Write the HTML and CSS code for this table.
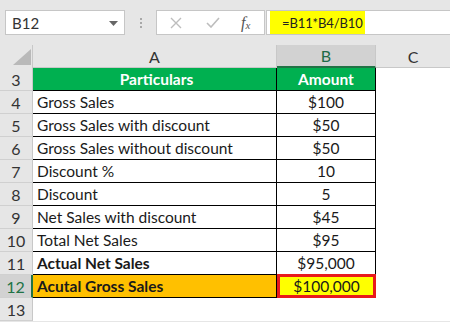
FILE: index.html
```html
<!DOCTYPE html>
<html>
<head>
<meta charset="utf-8">
<link rel="stylesheet" href="styles.css">
</head>
<body>
<div class="toolbar">
  <div class="namebox"><span>B12</span><svg class="caret" width="9" height="5" viewBox="0 0 9 5"><path d="M0 0h9L4.5 5z" fill="#666"/></svg></div>
  <div class="dots"><i></i><i></i><i></i></div>
  <div class="btns">
    <svg width="12" height="12" viewBox="0 0 12 12"><path d="M1 1l10 10M11 1L1 11" stroke="#bdbdbd" stroke-width="1.4" fill="none"/></svg>
    <svg width="14" height="11" viewBox="0 0 14 11"><path d="M1 6l4 4 8-9" stroke="#bdbdbd" stroke-width="1.6" fill="none"/></svg>
    <span class="fx">f<sub>x</sub></span>
  </div>
  <div class="formula"><span class="hl">=B11*B4/B10</span></div>
</div>
<div class="sheet">
  <div class="corner"><svg width="18" height="16" viewBox="0 0 18 16"><path d="M18 0V16H0z" fill="#b9b9b9"/></svg></div>
  <div class="colhead">A</div>
  <div class="colhead sel">B</div>
  <div class="colhead last">C</div>

  <div class="rowhead">3</div>
  <div class="cell th">Particulars</div>
  <div class="cell th num">Amount</div>
  <div class="blank"></div>

  <div class="rowhead">4</div>
  <div class="cell">Gross Sales</div>
  <div class="cell num">$100</div>
  <div class="blank"></div>

  <div class="rowhead">5</div>
  <div class="cell">Gross Sales with discount</div>
  <div class="cell num">$50</div>
  <div class="blank"></div>

  <div class="rowhead">6</div>
  <div class="cell">Gross Sales without discount</div>
  <div class="cell num">$50</div>
  <div class="blank"></div>

  <div class="rowhead">7</div>
  <div class="cell">Discount %</div>
  <div class="cell num">10</div>
  <div class="blank"></div>

  <div class="rowhead">8</div>
  <div class="cell">Discount</div>
  <div class="cell num">5</div>
  <div class="blank"></div>

  <div class="rowhead">9</div>
  <div class="cell">Net Sales with discount</div>
  <div class="cell num">$45</div>
  <div class="blank"></div>

  <div class="rowhead">10</div>
  <div class="cell">Total Net Sales</div>
  <div class="cell num">$95</div>
  <div class="blank"></div>

  <div class="rowhead">11</div>
  <div class="cell bold">Actual Net Sales</div>
  <div class="cell num">$95,000</div>
  <div class="blank"></div>

  <div class="rowhead selrow">12</div>
  <div class="cell bold orange">Acutal Gross Sales</div>
  <div class="cell num active">$100,000<span class="handle"></span></div>
  <div class="blank"></div>

  <div class="rowhead">13</div>
  <div class="blank"></div>
  <div class="blank"></div>
  <div class="blank"></div>
</div>
</body>
</html>
```

FILE: styles.css
```css
* { box-sizing: border-box; }
html, body { margin: 0; padding: 0; }
body {
  width: 450px;
  height: 322px;
  overflow: hidden;
  background: #e6e6e6;
  font-family: Lato, "Open Sans", sans-serif;
  color: #1a1a1a;
}
.toolbar {
  height: 45px;
  padding: 10px 0 0 5px;
  display: flex;
  align-items: flex-start;
}
.namebox {
  width: 120px;
  height: 25px;
  background: #fff;
  border: 1px solid #c6c6c6;
  display: flex;
  align-items: center;
  justify-content: space-between;
  padding: 0 6px 0 6px;
  font-size: 15px;
  color: #333;
}
.caret { margin-top: 1px; }
.dots {
  width: 31px;
  height: 25px;
  display: flex;
  flex-direction: column;
  align-items: center;
  justify-content: center;
  gap: 2px;
}
.dots i {
  display: block;
  width: 2px;
  height: 2px;
  background: #a8a8a8;
}
.btns {
  width: 109px;
  height: 25px;
  background: #fff;
  border: 1px solid #c6c6c6;
  display: flex;
  align-items: center;
  padding: 0 0 0 13px;
  gap: 0;
}
.btns svg:nth-child(1) { margin-right: 24px; }
.btns svg:nth-child(2) { margin-right: 21px; }
.fx {
  font-family: "Liberation Serif", serif;
  font-style: italic;
  font-size: 16px;
  color: #555;
  line-height: 1;
}
.fx sub { font-size: 11px; vertical-align: -1px; }
.formula {
  flex: 1;
  height: 25px;
  margin-left: 1px;
  background: #fff;
  border: 1px solid #c6c6c6;
  border-right: none;
  padding: 0 0 0 3px;
  display: flex;
  align-items: stretch;
}
.hl {
  background: #ffff00;
  width: 95px;
  padding-left: 12px;
  display: flex;
  align-items: center;
  font-size: 13px;
  letter-spacing: -0.1px;
  color: #222;
  white-space: nowrap;
}
.sheet {
  display: grid;
  grid-template-columns: 33px 244px 99px 1fr;
  grid-auto-rows: 23px;
  background: #fff;
}
.corner {
  background: #e6e6e6;
  border-right: 1px solid #c8c8c8;
  display: flex;
  align-items: flex-end;
  justify-content: flex-end;
  padding: 0 1px 3px 0;
}
.colhead {
  background: #e6e6e6;
  border-right: 1px solid #c8c8c8;
  display: flex;
  align-items: center;
  justify-content: center;
  font-size: 16px;
  color: #333;
  border-bottom: 1px solid #c8c8c8;
}
.colhead.sel {
  background: #d2d2d2;
  color: #1f6b47;
  border-bottom: 2px solid #217346;
}
.colhead.last { border-right: none; }
.rowhead {
  background: #e6e6e6;
  border-right: 1px solid #c8c8c8;
  border-bottom: 1px solid #d0d0d0;
  display: flex;
  align-items: center;
  justify-content: center;
  font-size: 16px;
  color: #333;
}
.rowhead.selrow {
  background: #d2d2d2;
  color: #217346;
  border-right: 2px solid #217346;
}
.cell {
  border-right: 1px solid #000;
  border-bottom: 1px solid #000;
  display: flex;
  align-items: center;
  padding: 0 0 0 4px;
  font-size: 15.5px;
  white-space: nowrap;
  overflow: hidden;
  color: #1a1a1a;
}
.cell.num { justify-content: center; padding: 0; }
.cell.th {
  background: #00b050;
  color: #fff;
  font-weight: bold;
  justify-content: center;
}
.cell.bold { font-weight: bold; }
.cell.orange { background: #ffc000; }
.cell.active {
  background: #ffff00;
  border: 3px solid #e8191c;
  margin-top: -1px;
  position: relative;
}
.handle {
  position: absolute;
  right: -4px;
  bottom: -4px;
  width: 4px;
  height: 4px;
  background: #217346;
}
.blank { background: #fff; }
```
